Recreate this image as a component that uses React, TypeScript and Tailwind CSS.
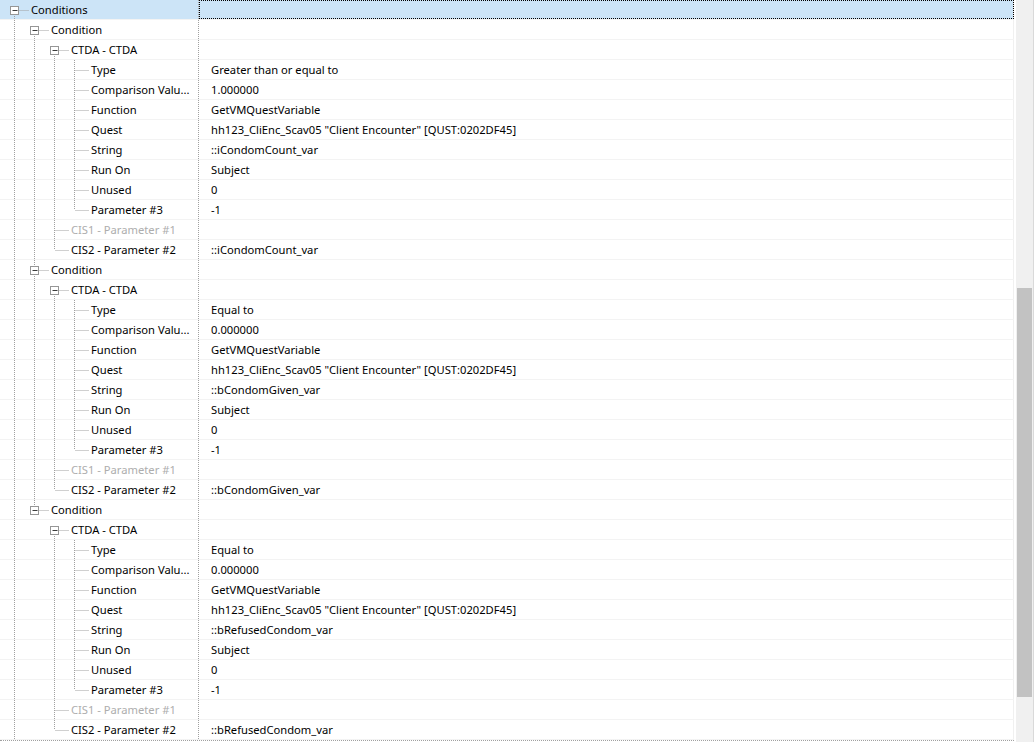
import React from "react";

interface TreeRow {
  level: number;
  label: string;
  value?: string;
  button?: boolean;
  disabled?: boolean;
  top: boolean;
  bottom: boolean;
  guides: boolean[];
}

const conditions = [
  { type: "Greater than or equal to", cmp: "1.000000", str: "::iCondomCount_var" },
  { type: "Equal to", cmp: "0.000000", str: "::bCondomGiven_var" },
  { type: "Equal to", cmp: "0.000000", str: "::bRefusedCondom_var" },
];

const quest = 'hh123_CliEnc_Scav05 "Client Encounter" [QUST:0202DF45]';

function buildRows(): TreeRow[] {
  const rows: TreeRow[] = [
    { level: 0, label: "Conditions", button: true, top: false, bottom: true, guides: [] },
  ];
  conditions.forEach((c, k) => {
    const more = k < conditions.length - 1;
    rows.push({ level: 1, label: "Condition", button: true, top: k > 0, bottom: more, guides: [true] });
    rows.push({ level: 2, label: "CTDA - CTDA", button: true, top: false, bottom: true, guides: [true, more] });
    const fields: [string, string][] = [
      ["Type", c.type],
      ["Comparison Valu...", c.cmp],
      ["Function", "GetVMQuestVariable"],
      ["Quest", quest],
      ["String", c.str],
      ["Run On", "Subject"],
      ["Unused", "0"],
      ["Parameter #3", "-1"],
    ];
    fields.forEach(([label, value], j) => {
      rows.push({
        level: 3,
        label,
        value,
        top: true,
        bottom: j < fields.length - 1,
        guides: [true, more, true],
      });
    });
    rows.push({ level: 2, label: "CIS1 - Parameter #1", disabled: true, top: true, bottom: true, guides: [true, more] });
    rows.push({ level: 2, label: "CIS2 - Parameter #2", value: c.str, top: true, bottom: false, guides: [true, more] });
  });
  return rows;
}

const LINE = "#a0a0a0";

function TreeLines({ row }: { row: TreeRow }) {
  const w = 31 + row.level * 20;
  const cx = 14.5 + row.level * 20;
  return (
    <svg width={w} height={20} className="shrink-0 self-start">
      {row.guides.map((on, i) =>
        on ? (
          <line key={i} x1={14.5 + i * 20} y1={0} x2={14.5 + i * 20} y2={20} stroke={LINE} strokeDasharray="1 1" />
        ) : null
      )}
      {row.top && <line x1={cx} y1={0} x2={cx} y2={10} stroke={LINE} strokeDasharray="1 1" />}
      {row.bottom && <line x1={cx} y1={10} x2={cx} y2={20} stroke={LINE} strokeDasharray="1 1" />}
      <line x1={row.button ? cx + 5 : cx + 1} y1={10.5} x2={cx + 14} y2={10.5} stroke={LINE} strokeDasharray="1 1" />
      {row.button && (
        <g>
          <rect x={cx - 4} y={6.5} width={8} height={8} fill="#ffffff" stroke="#969696" />
          <line x1={cx - 2} y1={10.5} x2={cx + 3} y2={10.5} stroke="#3c3c3c" />
        </g>
      )}
    </svg>
  );
}

export default function App() {
  const rows = buildRows();
  return (
    <div className="flex h-[742px] w-[1036px] overflow-hidden bg-white font-['Noto_Sans',sans-serif] text-[11.2px] text-black">
      <div className="flex w-[1014px] flex-col">
        {rows.map((row, idx) => {
          const selected = idx === 0;
          return (
            <div
              key={idx}
              className={`flex h-[20px] shrink-0 border-b border-[#f3f3f3] ${selected ? "bg-[#cce4f7]" : ""}`}
            >
              <div className="flex w-[199px] shrink-0 items-center overflow-hidden border-r border-dotted border-[#a0a0a0]">
                <TreeLines row={row} />
                <span className={`whitespace-nowrap pt-[2px] ${row.disabled ? "text-[#adadad]" : ""}`}>{row.label}</span>
              </div>
              <div
                className={`flex w-[815px] items-center border-r border-[#f0f0f0] pl-[12px] ${
                  selected ? "outline outline-1 -outline-offset-1 outline-dotted outline-black" : ""
                }`}
              >
                <span className="whitespace-nowrap pt-[2px]">{row.value ?? ""}</span>
              </div>
            </div>
          );
        })}
        <div className="h-0 border-t border-dotted border-[#a0a0a0]" />
      </div>
      <div className="w-[2px]" />
      <div className="flex w-[18px] flex-col border-r border-[#d9d9d9] bg-[#f0f0f0] pl-[1px] pr-[1px]">
        <div className="mt-[288px] h-[409px] bg-[#c2c2c2]" />
      </div>
    </div>
  );
}
